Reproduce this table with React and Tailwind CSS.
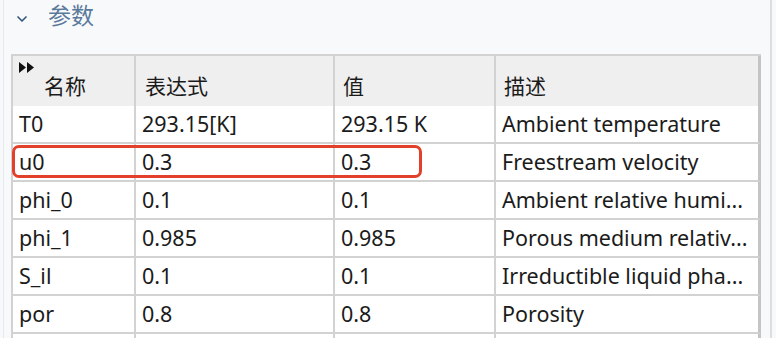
import { ChevronDown } from "lucide-react";

const rows = [
  { name: "T0", expr: "293.15[K]", value: "293.15 K", desc: "Ambient temperature" },
  { name: "u0", expr: "0.3", value: "0.3", desc: "Freestream velocity" },
  { name: "phi_0", expr: "0.1", value: "0.1", desc: "Ambient relative humi..." },
  { name: "phi_1", expr: "0.985", value: "0.985", desc: "Porous medium relativ..." },
  { name: "S_il", expr: "0.1", value: "0.1", desc: "Irreductible liquid pha..." },
  { name: "por", expr: "0.8", value: "0.8", desc: "Porosity" },
  { name: "", expr: "", value: "", desc: "" },
];

const cols = "grid grid-cols-[123px_199px_161px_265px] shrink-0";
const cell = "border-r-2 border-b-2 border-[#d2d2d2] pl-[6px] flex items-center whitespace-nowrap overflow-hidden";

export default function App() {
  return (
    <div
      className="w-[776px] h-[338px] overflow-hidden bg-[#f8f9fb] text-[#1b1b1b] flex"
      style={{ fontFamily: '"Noto Sans", "Noto Sans CJK SC", sans-serif' }}
    >
      {/* 左侧细线 */}
      <div className="w-[3px] shrink-0" />
      <div className="w-px shrink-0 bg-[#e6e8ec]" />

      <div className="flex-1 flex flex-col pl-[7px] min-h-0">
        {/* 标题 */}
        <div className="h-[54px] shrink-0 flex items-start">
          <ChevronDown size={16} strokeWidth={2.5} className="text-[#35577d] mt-[11px] ml-[3px]" />
          <span className="ml-[18px] text-[23px] leading-[30px] text-[#5a7a9c]">参数</span>
        </div>

        {/* 表格 */}
        <div className="relative shrink-0 w-[750px] border-l-2 border-t-2 border-[#d2d2d2]">
          <div className={`${cols} h-[50px] bg-[#efefef] text-[21px]`}>
            <div className="relative border-r-2 border-[#d2d2d2] pl-[31px] pt-[15px]">
              <span className="absolute left-[6px] top-[6px] flex">
                <svg width="16" height="11" viewBox="0 0 16 11">
                  <path d="M0 0 L7 5.5 L0 11 Z M8 0 L15 5.5 L8 11 Z" fill="#111" />
                </svg>
              </span>
              名称
            </div>
            <div className="border-r-2 border-[#d2d2d2] pl-[9px] pt-[15px]">表达式</div>
            <div className="border-r-2 border-[#d2d2d2] pl-[8px] pt-[15px]">值</div>
            <div className="border-r-[3px] border-[#c4c4c4] pl-[8px] pt-[15px]">描述</div>
          </div>

          {rows.map((r, i) => (
            <div key={i} className={`${cols} h-[38px] bg-white text-[21.5px]`}>
              <div className={cell}>{r.name}</div>
              <div className={cell}>{r.expr}</div>
              <div className={cell}>{r.value}</div>
              <div className={`${cell} border-r-[3px] border-r-[#c4c4c4]`}>{r.desc}</div>
            </div>
          ))}

          {/* 红色标注框 */}
          <div className="absolute left-[-1px] top-[89px] w-[410px] h-[33px] border-[3px] border-[#e2402b] rounded-[7px]" />
        </div>
      </div>

      {/* 右侧竖条 */}
      <div className="w-[2px] shrink-0 bg-[#dcdde0] mr-[4px]" />
    </div>
  );
}
